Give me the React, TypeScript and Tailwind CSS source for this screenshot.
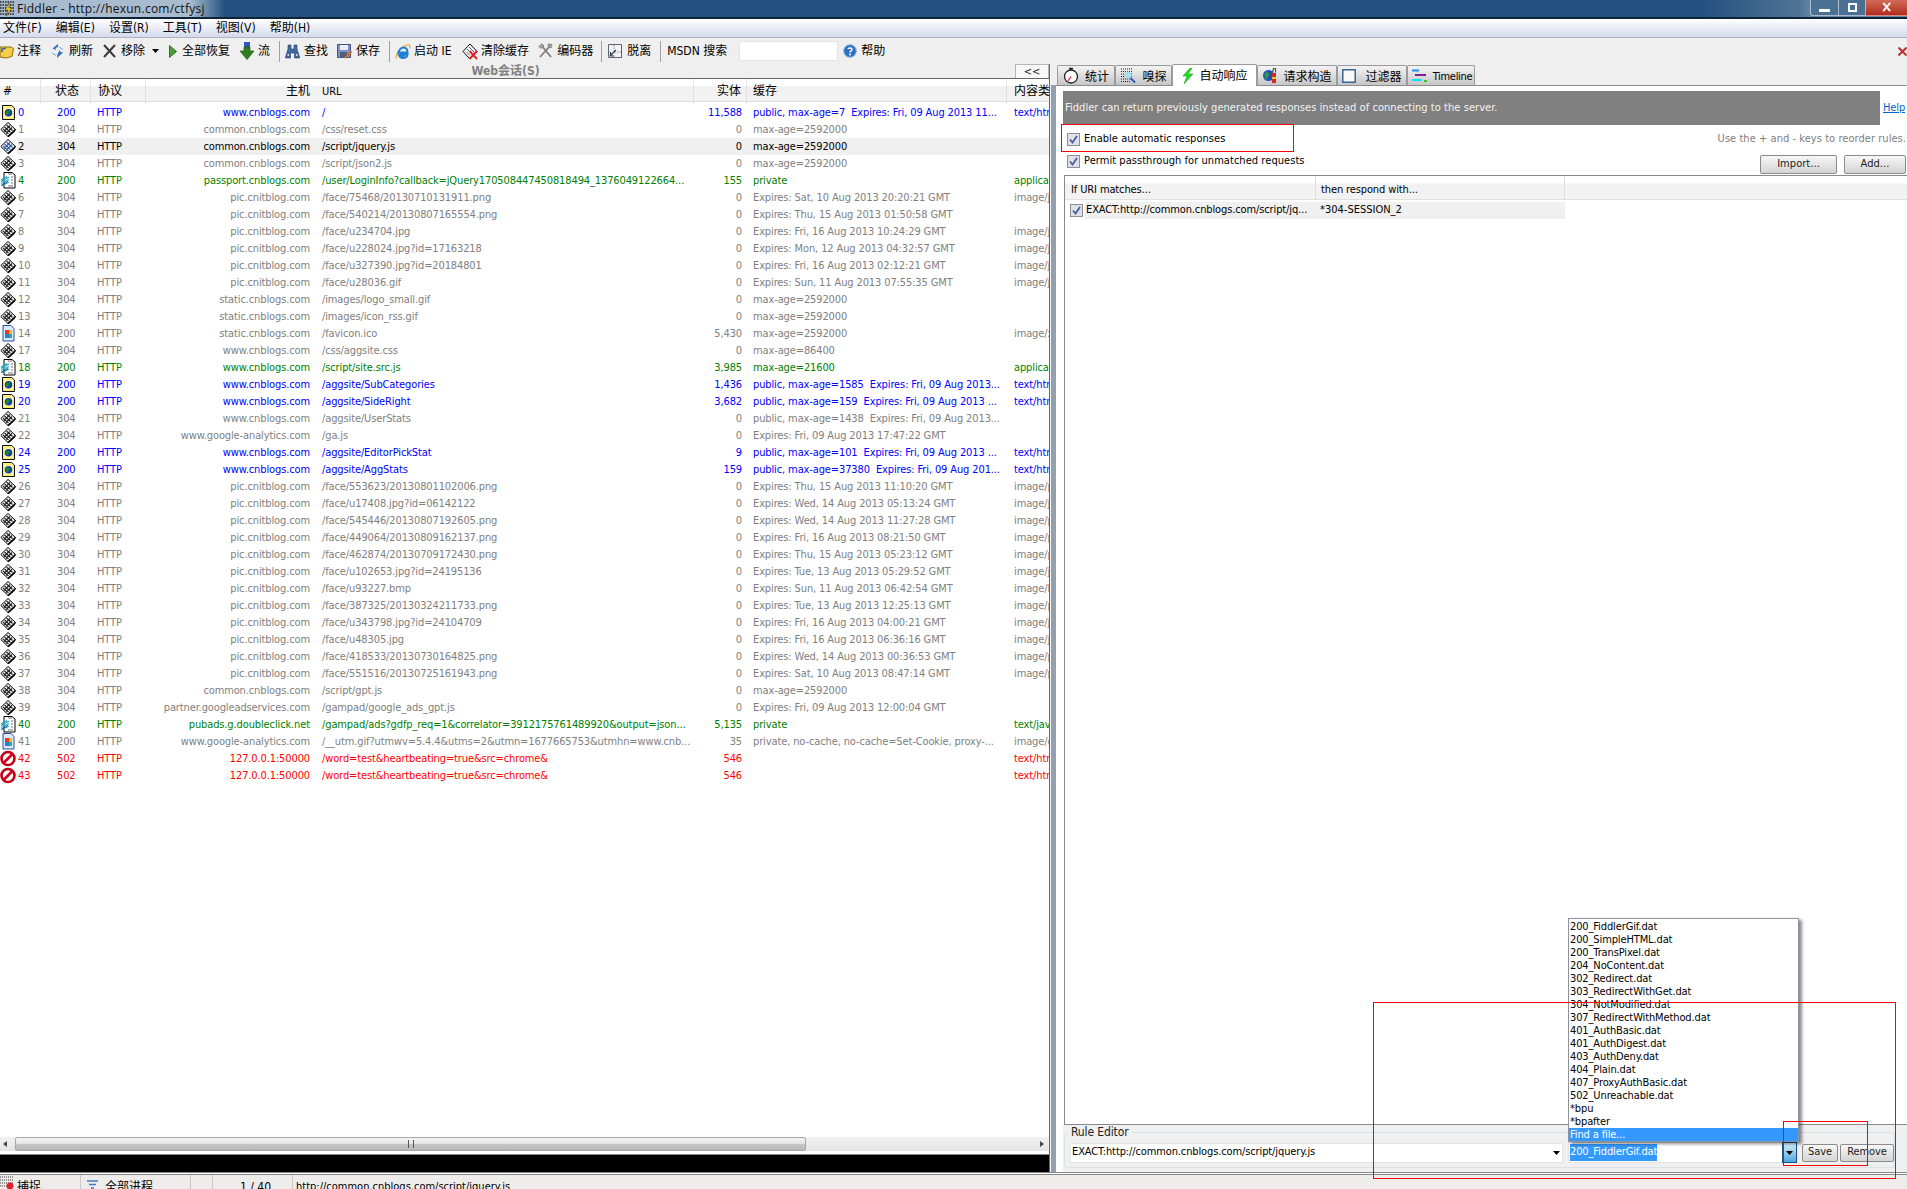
import type { ReactNode } from "react";

const base = "font-['DejaVu_Sans_Condensed','Noto_Sans_CJK_SC',sans-serif]";

type Kind = "d" | "h" | "s" | "i" | "e";

const rowColor: Record<Kind, string> = {
  d: "text-[#808080]",
  h: "text-[#0000ff]",
  s: "text-[#008000]",
  i: "text-[#808080]",
  e: "text-[#ff0000]",
};

const pic = "pic.cnitblog.com";
const com = "common.cnblogs.com";
const sta = "static.cnblogs.com";
const www = "www.cnblogs.com";
const age = "max-age=2592000";

// kind, #, status, host, url, body, cache, type
const rows: [Kind, string, string, string, string, string, string, string][] = [
  ["h", "0", "200", www, "/", "11,588", "public, max-age=7  Expires: Fri, 09 Aug 2013 11...", "text/html"],
  ["d", "1", "304", com, "/css/reset.css", "0", age, ""],
  ["d", "2", "304", com, "/script/jquery.js", "0", age, ""],
  ["d", "3", "304", com, "/script/json2.js", "0", age, ""],
  ["s", "4", "200", "passport.cnblogs.com", "/user/LoginInfo?callback=jQuery170508447450818494_1376049122664...", "155", "private", "application"],
  ["d", "6", "304", pic, "/face/75468/20130710131911.png", "0", "Expires: Sat, 10 Aug 2013 20:20:21 GMT", "image/jpeg"],
  ["d", "7", "304", pic, "/face/540214/20130807165554.png", "0", "Expires: Thu, 15 Aug 2013 01:50:58 GMT", ""],
  ["d", "8", "304", pic, "/face/u234704.jpg", "0", "Expires: Fri, 16 Aug 2013 10:24:29 GMT", "image/jpeg"],
  ["d", "9", "304", pic, "/face/u228024.jpg?id=17163218", "0", "Expires: Mon, 12 Aug 2013 04:32:57 GMT", "image/jpeg"],
  ["d", "10", "304", pic, "/face/u327390.jpg?id=20184801", "0", "Expires: Fri, 16 Aug 2013 02:12:21 GMT", "image/jpeg"],
  ["d", "11", "304", pic, "/face/u28036.gif", "0", "Expires: Sun, 11 Aug 2013 07:55:35 GMT", "image/jpeg"],
  ["d", "12", "304", sta, "/images/logo_small.gif", "0", age, ""],
  ["d", "13", "304", sta, "/images/icon_rss.gif", "0", age, ""],
  ["i", "14", "200", sta, "/favicon.ico", "5,430", age, "image/x-icon"],
  ["d", "17", "304", www, "/css/aggsite.css", "0", "max-age=86400", ""],
  ["s", "18", "200", www, "/script/site.src.js", "3,985", "max-age=21600", "application"],
  ["h", "19", "200", www, "/aggsite/SubCategories", "1,436", "public, max-age=1585  Expires: Fri, 09 Aug 2013...", "text/html"],
  ["h", "20", "200", www, "/aggsite/SideRight", "3,682", "public, max-age=159  Expires: Fri, 09 Aug 2013 ...", "text/html"],
  ["d", "21", "304", www, "/aggsite/UserStats", "0", "public, max-age=1438  Expires: Fri, 09 Aug 2013...", ""],
  ["d", "22", "304", "www.google-analytics.com", "/ga.js", "0", "Expires: Fri, 09 Aug 2013 17:47:22 GMT", ""],
  ["h", "24", "200", www, "/aggsite/EditorPickStat", "9", "public, max-age=101  Expires: Fri, 09 Aug 2013 ...", "text/html"],
  ["h", "25", "200", www, "/aggsite/AggStats", "159", "public, max-age=37380  Expires: Fri, 09 Aug 201...", "text/html"],
  ["d", "26", "304", pic, "/face/553623/20130801102006.png", "0", "Expires: Thu, 15 Aug 2013 11:10:20 GMT", "image/png"],
  ["d", "27", "304", pic, "/face/u17408.jpg?id=06142122", "0", "Expires: Wed, 14 Aug 2013 05:13:24 GMT", "image/jpeg"],
  ["d", "28", "304", pic, "/face/545446/20130807192605.png", "0", "Expires: Wed, 14 Aug 2013 11:27:28 GMT", "image/png"],
  ["d", "29", "304", pic, "/face/449064/20130809162137.png", "0", "Expires: Fri, 16 Aug 2013 08:21:50 GMT", "image/png"],
  ["d", "30", "304", pic, "/face/462874/20130709172430.png", "0", "Expires: Thu, 15 Aug 2013 05:23:12 GMT", "image/png"],
  ["d", "31", "304", pic, "/face/u102653.jpg?id=24195136", "0", "Expires: Tue, 13 Aug 2013 05:29:52 GMT", "image/jpeg"],
  ["d", "32", "304", pic, "/face/u93227.bmp", "0", "Expires: Sun, 11 Aug 2013 06:42:54 GMT", "image/bmp"],
  ["d", "33", "304", pic, "/face/387325/20130324211733.png", "0", "Expires: Tue, 13 Aug 2013 12:25:13 GMT", "image/png"],
  ["d", "34", "304", pic, "/face/u343798.jpg?id=24104709", "0", "Expires: Fri, 16 Aug 2013 04:00:21 GMT", "image/jpeg"],
  ["d", "35", "304", pic, "/face/u48305.jpg", "0", "Expires: Fri, 16 Aug 2013 06:36:16 GMT", "image/jpeg"],
  ["d", "36", "304", pic, "/face/418533/20130730164825.png", "0", "Expires: Wed, 14 Aug 2013 00:36:53 GMT", "image/png"],
  ["d", "37", "304", pic, "/face/551516/20130725161943.png", "0", "Expires: Sat, 10 Aug 2013 08:47:14 GMT", "image/png"],
  ["d", "38", "304", com, "/script/gpt.js", "0", age, ""],
  ["d", "39", "304", "partner.googleadservices.com", "/gampad/google_ads_gpt.js", "0", "Expires: Fri, 09 Aug 2013 12:00:04 GMT", ""],
  ["s", "40", "200", "pubads.g.doubleclick.net", "/gampad/ads?gdfp_req=1&correlator=3912175761489920&output=json...", "5,135", "private", "text/javascript"],
  ["i", "41", "200", "www.google-analytics.com", "/__utm.gif?utmwv=5.4.4&utms=2&utmn=1677665753&utmhn=www.cnb...", "35", "private, no-cache, no-cache=Set-Cookie, proxy-...", "image/gif"],
  ["e", "42", "502", "127.0.0.1:50000", "/word=test&heartbeating=true&src=chrome&", "546", "", "text/html"],
  ["e", "43", "502", "127.0.0.1:50000", "/word=test&heartbeating=true&src=chrome&", "546", "", "text/html"],
];

const responders = [
  "200_FiddlerGif.dat",
  "200_SimpleHTML.dat",
  "200_TransPixel.dat",
  "204_NoContent.dat",
  "302_Redirect.dat",
  "303_RedirectWithGet.dat",
  "304_NotModified.dat",
  "307_RedirectWithMethod.dat",
  "401_AuthBasic.dat",
  "401_AuthDigest.dat",
  "403_AuthDeny.dat",
  "404_Plain.dat",
  "407_ProxyAuthBasic.dat",
  "502_Unreachable.dat",
  "*bpu",
  "*bpafter",
];

const grid = "grid grid-cols-[41px_50px_55px_170px_378px_53px_260px_42px]";

function SessionIcon({ kind, selected }: { kind: Kind; selected?: boolean }) {
  if (kind === "d") {
    const c = selected ? "#2f5fa8" : "#222";
    return (
      <svg width="17" height="17" viewBox="0 0 17 17" className="shrink-0">
        <path d="M8 1.500 15.500 8.500 8 15.500 .8 8.500Z" fill="#f4f4f4" stroke="#000" />
        <path d="M4.500 6 10.500 11.500M6.500 4 12.500 9.500M3 8 8.500 13M10 4.500 4 10.500M12 6.500 6 12.500" stroke={c} strokeWidth="1.100" />
        <path d="M15.500 8.500 8 15.800M14.500 10 9 15" stroke="#000" strokeWidth="1.500" />
      </svg>
    );
  }
  if (kind === "h") {
    return (
      <svg width="17" height="17" viewBox="0 0 17 17" className="shrink-0">
        <path d="M2.500 1.500H11.500L14.500 4V15.500H2.500Z" fill="#fff6a0" stroke="#111" />
        <path d="M3.500 3H11M3.500 14.500H13.500M13.500 5V14M3.500 4V14" stroke="#f2dc10" strokeDasharray="1 1" />
        <circle cx="8.500" cy="8.700" r="3.800" fill="#1b3fa8" />
        <path d="M6 7.500C7 5.500 9 6 9.500 7S8 10 7.500 11.800C6 10.500 5.500 9 6 7.500Z" fill="#1e8a2e" />
      </svg>
    );
  }
  if (kind === "s") {
    return (
      <svg width="17" height="17" viewBox="0 0 17 17" className="shrink-0">
        <path d="M4 .5H12L15 3V16H4Z" fill="#fff" stroke="#000" />
        <path d="M8 2H12M8 14H13M11 5H13M11 8H13M11 11H13" stroke="#777" />
        <path d="M1 8 7 4.500M9 5 1 9.500M1 11.500 9 7.500M2 13.500 9 10" stroke="#25a6c9" strokeWidth="1.300" />
        <path d="M1 13.500 8 9.500" stroke="#14507c" />
      </svg>
    );
  }
  if (kind === "i") {
    return (
      <svg width="17" height="17" viewBox="0 0 17 17" className="shrink-0">
        <path d="M3 .5H11L14 3.500V16H3Z" fill="#dbe8fb" stroke="#2a4fa0" />
        <rect x="5" y="5" width="4" height="4" fill="#e23b2e" />
        <rect x="9" y="5" width="3" height="4" fill="#f4c01e" />
        <rect x="5" y="9" width="4" height="4" fill="#2a7de1" />
        <rect x="9" y="9" width="3" height="4" fill="#37b24d" />
      </svg>
    );
  }
  return (
    <svg width="17" height="17" viewBox="0 0 17 17" className="shrink-0">
      <circle cx="8" cy="8.500" r="6.500" fill="#fff" stroke="#c00014" strokeWidth="2.600" />
      <path d="M3.500 13 12.500 4" stroke="#d4001a" strokeWidth="2.600" />
    </svg>
  );
}

const icons: Record<string, ReactNode> = {
  note: (
    <svg width="14" height="17" viewBox="0 0 14 17" className="shrink-0">
      <path d="M0 4H11L13.500 5.500 12 13.500 6 15 0 14Z" fill="#f5cf45" stroke="#8a6a12" />
      <path d="M1 6.500 6 5M1 8.500 3 8" stroke="#2c5fbe" strokeWidth="1.500" />
    </svg>
  ),
  refresh: (
    <svg width="13" height="16" viewBox="0 0 13 16" className="shrink-0">
      <path d="M7 1 1.500 5.500 5 7 4.500 5 7 4Z" fill="#2f6fc4" />
      <path d="M6 15 12 9.500 9 8.500 9 6.500 6.500 11Z" fill="#2f6fc4" />
      <path d="M8 4 12 6.500M1 10 5 12.500" stroke="#6fa6e6" />
    </svg>
  ),
  remove: (
    <svg width="13" height="14" viewBox="0 0 13 14" className="shrink-0">
      <path d="M1 1 12 13M12 1 1 13" stroke="#3a3a3a" strokeWidth="2" />
    </svg>
  ),
  play: (
    <svg width="8" height="13" viewBox="0 0 8 13" className="shrink-0">
      <path d="M0.500 0.500 7.500 6.500 0.500 12.500Z" fill="#4d9c3a" stroke="#2f6e2a" />
    </svg>
  ),
  stream: (
    <svg width="14" height="18" viewBox="0 0 14 18" className="shrink-0">
      <path d="M4 0H10V5H4Z" fill="#2d55c4" />
      <path d="M4 5H10V9H14L7 17.500 0 9H4Z" fill="#2f7d1d" stroke="#1d5a14" strokeWidth=".7" />
    </svg>
  ),
  find: (
    <svg width="15" height="15" viewBox="0 0 15 15" className="shrink-0">
      <path d="M3 1H6V5H9V1H12V5L14.500 13V14H9.500V9H5.500V14H.5V13L3 5Z" fill="#44679c" stroke="#24406e" strokeWidth=".6" />
      <path d="M2.500 11H4M11 11H12.500" stroke="#c9d8ee" strokeWidth="2" />
    </svg>
  ),
  save: (
    <svg width="15" height="16" viewBox="0 0 15 16" className="shrink-0">
      <path d="M.5 1.500H13.500V14.500H.5Z" fill="#7d8fc5" stroke="#44527e" />
      <rect x="3" y="2" width="8" height="5" fill="#e8ecf6" />
      <rect x="3" y="9" width="7" height="5.500" fill="#555e78" />
      <path d="M8 15 14.500 8.500" stroke="#c9702a" strokeWidth="2" />
    </svg>
  ),
  ie: (
    <svg width="16" height="17" viewBox="0 0 16 17" className="shrink-0">
      <path d="M1.500 15.500C0 12 5 4 12 2 15 1 15.500 3.500 14.500 5.500" fill="none" stroke="#e7a52b" strokeWidth="1.200" />
      <path d="M3.500 9.500H12.500C12.500 6 10.500 4.500 8.500 4.500S4 6.500 3.500 9.500ZM3.500 9.500C3 13.500 6 15 8 15S12 14 12.500 11.500H10C9.500 12.800 8.500 13 8 13 6.500 13 5.800 12 5.800 11H12.500" fill="none" stroke="#1f7fd6" strokeWidth="2" />
    </svg>
  ),
  clear: (
    <svg width="16" height="17" viewBox="0 0 16 17" className="shrink-0">
      <path d="M8 1 15 8.500 8 16 1 8.500Z" fill="#fff" stroke="#000" />
      <path d="M5 6 10 11M7 4 12 9M4 8.500 8 12.500" stroke="#444" strokeWidth=".9" />
      <path d="M7.500 8 15 16M15 8 7.500 16" stroke="#e0202a" strokeWidth="2" />
    </svg>
  ),
  encoder: (
    <svg width="15" height="16" viewBox="0 0 15 16" className="shrink-0">
      <path d="M2 14 12 3M3 2 13 14" stroke="#7d7d7d" strokeWidth="1.800" />
      <path d="M.8 3.500 4 .8 6 3 3 5.500ZM10 1 14 1.500 13 5 10.500 4Z" fill="#a8a8a8" stroke="#5c5c5c" strokeWidth=".6" />
    </svg>
  ),
  detach: (
    <svg width="14" height="16" viewBox="0 0 14 16" className="shrink-0">
      <path d="M.5 1.500H13.500V14.500H.5Z" fill="#f3f3f3" stroke="#5c6472" />
      <path d="M6 2V9H13" stroke="#8b94a3" strokeDasharray="1.500 1" fill="none" />
      <path d="M2 13 8 7M2.500 9V13H6.500" stroke="#2c3a52" strokeWidth="1.200" fill="none" />
    </svg>
  ),
  help: (
    <svg width="14" height="14" viewBox="0 0 14 14" className="shrink-0">
      <circle cx="7" cy="7" r="6.300" fill="#2c6fc0" stroke="#8fb4dd" />
      <path d="M5 5.200C5.300 3.500 9 3.500 9 5.500 9 6.800 7 6.800 7 8.400" fill="none" stroke="#fff" strokeWidth="1.500" />
      <circle cx="7" cy="10.500" r="1" fill="#fff" />
    </svg>
  ),
};

function Tool({ icon, text, gap, className = "" }: { icon: string; text: string; gap: string; className?: string }) {
  return (
    <div className={`flex items-center whitespace-nowrap ${gap} ${className}`}>
      {icons[icon]}
      <span>{text}</span>
    </div>
  );
}

function Sep({ className = "" }: { className?: string }) {
  return <div className={`h-[21px] w-px bg-[#a0a0a0] ${className}`} />;
}

function Check({ className = "" }: { className?: string }) {
  return (
    <svg width="13" height="13" viewBox="0 0 13 13" className={`shrink-0 ${className}`}>
      <rect x=".5" y=".5" width="12" height="12" fill="#dfe1e8" stroke="#8e8f96" />
      <path d="M3 6.500 5.500 9.500 10 3" fill="none" stroke="#4a5c9e" strokeWidth="1.800" />
    </svg>
  );
}

function Caret({ className = "" }: { className?: string }) {
  return (
    <svg width="7" height="4" viewBox="0 0 7 4" className={`shrink-0 ${className}`}>
      <path d="M0 0H7L3.500 4Z" fill="#000" />
    </svg>
  );
}

function Button({ text, className }: { text: string; className: string }) {
  return (
    <div className={`flex items-center justify-center rounded-[2px] border border-[#8a8a8a] bg-gradient-to-b from-[#f7f7f7] to-[#d4d4d4] text-[#222] ${className}`}>
      {text}
    </div>
  );
}

const tabs: { name: string; width: string; gap: string; icon: ReactNode }[] = [
  {
    name: "统计",
    width: "w-[58px]",
    gap: "gap-[6px]",
    icon: (
      <svg width="16" height="17" viewBox="0 0 16 17">
        <circle cx="8" cy="9.500" r="6.500" fill="#fff" stroke="#222" strokeWidth="1.300" />
        <path d="M6 1.500H10M8 2V3" stroke="#222" strokeWidth="1.300" />
        <path d="M8 9.500 5 14" stroke="#e0202a" strokeWidth="1.300" />
      </svg>
    ),
  },
  {
    name: "嗅探",
    width: "w-[57px]",
    gap: "gap-[6px]",
    icon: (
      <svg width="16" height="16" viewBox="0 0 16 16">
        <path d="M1 1H13M1 3.500H13M1 6H13M1 8.500H13M1 11H13M1 13.500H11" stroke="#222" strokeWidth="1" strokeDasharray="1 1" />
        <circle cx="8" cy="7" r="3.500" fill="#a9dff0" />
        <path d="M10.500 10 15 14.500" stroke="#2a56c8" strokeWidth="2" />
      </svg>
    ),
  },
  {
    name: "请求构造",
    width: "w-[80px]",
    gap: "gap-[5px]",
    icon: (
      <svg width="16" height="17" viewBox="0 0 16 17">
        <circle cx="6.500" cy="8.500" r="5.500" fill="#1f4fbf" />
        <path d="M3 6C5 4 7 5 7 7S5 10 5.500 13C3 12 2 9 3 6Z" fill="#2f9a31" />
        <rect x="10" y="6" width="4" height="10" fill="#d42a1c" />
        <path d="M10 11H14" stroke="#f2c21d" strokeWidth="2" />
        <path d="M10.500 5.500 11.500 1.500H13.500V5.500" fill="none" stroke="#555" strokeWidth="1.200" />
      </svg>
    ),
  },
  {
    name: "过滤器",
    width: "w-[70px]",
    gap: "gap-[9px]",
    icon: (
      <svg width="14" height="14" viewBox="0 0 14 14">
        <rect x=".8" y=".8" width="12.400" height="12.400" fill="#f8f8f8" stroke="#1f4f86" strokeWidth="1.300" />
      </svg>
    ),
  },
  {
    name: "Timeline",
    width: "w-[68px] pl-[2px]",
    gap: "gap-[6px]",
    icon: (
      <svg width="15" height="14" viewBox="0 0 15 14">
        <path d="M0 1.500H7" stroke="#1f8cf0" strokeWidth="2" />
        <path d="M3 6H14" stroke="#7b1fa2" strokeWidth="2" />
        <path d="M0 11H10" stroke="#00e5ff" strokeWidth="2" />
        <path d="M12 12H15" stroke="#3cc23c" strokeWidth="2" />
      </svg>
    ),
  },
];

function Tab({ t }: { t: (typeof tabs)[number] }) {
  return (
    <div className={`flex h-[20px] shrink-0 items-center justify-center rounded-t-[2px] border border-b-0 border-[#9a9a9a] bg-gradient-to-b from-[#f4f4f4] to-[#c6c6c6] ${t.width} ${t.gap} ${t.name === "Timeline" ? "text-[11px] tracking-[-0.3px]" : ""}`}>
      {t.icon}
      <span className="pt-[3px]">{t.name}</span>
    </div>
  );
}

export default function App() {
  return (
    <div className={`relative flex h-[1189px] w-[1907px] flex-col overflow-hidden bg-white text-[11px] tracking-[-0.12px] text-black ${base}`}>
      {/* title bar */}
      <div className="flex h-[19px] shrink-0 items-center justify-between border-b-2 border-[#0d2338] bg-[linear-gradient(90deg,#a9bccf_0px,#a9bccf_190px,#6f90b0_205px,#24507f_225px,#22507f_1700px,#4f7596_1800px,#6d8ba6_1815px)]">
        <div className="flex items-center gap-[3px]">
          <svg width="14" height="16" viewBox="0 0 14 16">
            <path d="M0 1H14M0 4H14M0 7H14M0 10H14M0 13H14" stroke="#222" strokeWidth="1.500" strokeDasharray="1.500 1" />
            <path d="M9 2 5 9H8L6 15 12 7H9Z" fill="#f1d21f" stroke="#222" strokeWidth=".5" />
          </svg>
          <span className="font-['Open_Sans',sans-serif] text-[12px] tracking-[.25px] text-[#111]">Fiddler - http://hexun.com/ctfysj</span>
        </div>
        <div className="flex h-[16px] items-stretch self-start">
          <div className="flex w-[29px] items-end justify-center rounded-bl-[3px] border border-t-0 border-[#a9bdcf] bg-[#4a7094] pb-[3px]">
            <div className="h-[3px] w-[11px] bg-white" />
          </div>
          <div className="flex w-[27px] items-center justify-center border-b border-r border-[#a9bdcf] bg-[#4a7094]">
            <div className="size-[9px] border-2 border-white bg-[#4a7094]" />
          </div>
          <div className="flex w-[41px] items-center justify-center border-b border-[#d88] bg-gradient-to-b from-[#d2695a] to-[#b12a1c] text-[15px] leading-none font-bold text-white">×</div>
        </div>
      </div>

      {/* menu */}
      <div className="flex h-[19px] shrink-0 items-center gap-[14px] border-b border-[#b0b3bd] bg-gradient-to-b from-white to-[#d5dbed] pl-[3px] text-[12px] tracking-normal">
        <span>文件(F)</span>
        <span>编辑(E)</span>
        <span>设置(R)</span>
        <span>工具(T)</span>
        <span>视图(V)</span>
        <span>帮助(H)</span>
      </div>

      {/* toolbar */}
      <div className="flex h-[26px] shrink-0 items-center bg-[#efefef] text-[12px] tracking-normal">
        <Tool icon="note" text="注释" gap="gap-[3px]" />
        <Tool icon="refresh" text="刷新" gap="gap-[5px]" className="ml-[10px]" />
        <Tool icon="remove" text="移除" gap="gap-[5px]" className="ml-[10px]" />
        <Caret className="ml-[7px]" />
        <Tool icon="play" text="全部恢复" gap="gap-[5px]" className="ml-[10px]" />
        <Tool icon="stream" text="流" gap="gap-[4px]" className="ml-[10px]" />
        <Sep className="ml-[9px]" />
        <Tool icon="find" text="查找" gap="gap-[4px]" className="ml-[5px]" />
        <Tool icon="save" text="保存" gap="gap-[4px]" className="ml-[9px]" />
        <Sep className="ml-[9px]" />
        <Tool icon="ie" text="启动 IE" gap="gap-[3px]" className="ml-[5px] w-[57px]" />
        <Tool icon="clear" text="清除缓存" gap="gap-[3px]" className="ml-[10px]" />
        <Tool icon="encoder" text="编码器" gap="gap-[4px]" className="ml-[9px]" />
        <Sep className="ml-[8px]" />
        <Tool icon="detach" text="脱离" gap="gap-[5px]" className="ml-[6px]" />
        <Sep className="ml-[9px]" />
        <span className="ml-[6px] w-[67px] whitespace-nowrap">MSDN 搜索</span>
        <div className="ml-[5px] h-[20px] w-[99px] rounded-[2px] border border-[#e4e4e4] bg-white" />
        <Tool icon="help" text="帮助" gap="gap-[4px]" className="ml-[5px]" />
        <div className="flex-1" />
        <svg width="9" height="9" viewBox="0 0 9 9">
          <path d="M.5 .5 8.500 8.500M8.500 .5 .5 8.500" stroke="#b93333" strokeWidth="2" />
        </svg>
      </div>

      {/* main split */}
      <div className="flex min-h-0 flex-1 border-b-[3px] border-double border-[#888]">
        {/* sessions */}
        <div className="flex w-[1050px] shrink-0 flex-col border-r border-[#666]">
          <div className="flex h-[15px] shrink-0 border-b border-[#666] bg-[#efefef]">
            <div className="flex-1 pr-[4px] text-center text-[12px] leading-[14px] font-bold tracking-normal text-[#808080]">Web会话(S)</div>
            <div className="flex w-[34px] items-center justify-center border border-b-0 border-[#b5b5b5] bg-[#f7f7f7] text-[11px] leading-none text-[#222]">&lt;&lt;</div>
          </div>
          <div className={`${grid} h-[23px] shrink-0 items-center border-b border-[#dcdcdc] bg-[linear-gradient(#ffffff_0%,#ffffff_30%,#f0f0f0_35%,#f3f3f3_100%)] text-[12px] tracking-normal`}>
            <div className="h-full border-r border-[#e2e2e2] pl-[3px] leading-[25px]">#</div>
            <div className="h-full border-r border-[#e2e2e2] pl-[14px] leading-[25px]">状态</div>
            <div className="h-full border-r border-[#e2e2e2] pl-[7px] leading-[25px]">协议</div>
            <div className="h-full pr-[6px] text-right leading-[25px]">主机</div>
            <div className="h-full border-r border-[#e2e2e2] pl-[6px] text-[11px] leading-[25px]">URL</div>
            <div className="h-full border-r border-[#e2e2e2] pr-[5px] text-right leading-[25px]">实体</div>
            <div className="h-full border-r border-[#e2e2e2] pl-[6px] leading-[25px]">缓存</div>
            <div className="h-full overflow-hidden pl-[7px] leading-[25px] whitespace-nowrap">内容类型</div>
          </div>
          <div className="min-h-0 flex-1 pt-[2px]">
            {rows.map((r) => {
              const selected = r[1] === "2";
              return (
                <div key={r[1]} className={`${grid} h-[17px] items-center leading-[17px] whitespace-nowrap ${selected ? "text-black" : rowColor[r[0]]}`}>
                  <div className="flex items-center">
                    <SessionIcon kind={r[0]} selected={selected} />
                    <span className={`flex-1 pl-[1px] ${selected ? "bg-[#f0f0f0]" : ""}`}>{r[1]}</span>
                  </div>
                  <div className={`pl-[16px] ${selected ? "bg-[#f0f0f0]" : ""}`}>{r[2]}</div>
                  <div className={`pl-[6px] ${selected ? "bg-[#f0f0f0]" : ""}`}>HTTP</div>
                  <div className={`pr-[6px] text-right ${selected ? "bg-[#f0f0f0]" : ""}`}>{r[3]}</div>
                  <div className={`overflow-hidden pl-[6px] ${selected ? "bg-[#f0f0f0]" : ""}`}>{r[4]}</div>
                  <div className={`pr-[5px] text-right ${selected ? "bg-[#f0f0f0]" : ""}`}>{r[5]}</div>
                  <div className={`h-[17px] overflow-hidden pl-[6px] whitespace-pre ${selected ? "bg-[#f0f0f0]" : ""}`}>{r[6]}</div>
                  <div className={`h-[17px] overflow-hidden pl-[7px] ${selected ? "bg-[#f0f0f0]" : ""}`}>{r[7]}</div>
                </div>
              );
            })}
          </div>
          {/* horizontal scrollbar */}
          <div className="flex h-[14px] shrink-0 items-center bg-gradient-to-b from-[#f2f2f2] to-[#e4e4e4]">
            <svg width="15" height="14" viewBox="0 0 15 14" className="shrink-0">
              <path d="M7 4V10L3 7Z" fill="#444" />
            </svg>
            <div className="flex h-[14px] w-[791px] items-center justify-center rounded-[2px] border border-[#a8a8a8] bg-[linear-gradient(#f4f4f4_0%,#e6e6e6_45%,#c4c4c4_55%,#b9b9b9_100%)]">
              <div className="h-[8px] w-[6px] border-x border-[#555] [background:linear-gradient(90deg,transparent_40%,#555_40%,#555_60%,transparent_60%)]" />
            </div>
            <div className="flex-1" />
            <svg width="15" height="14" viewBox="0 0 15 14" className="shrink-0">
              <path d="M6 4V10L10 7Z" fill="#444" />
            </svg>
          </div>
          <div className="mt-[3px] h-[18px] shrink-0 border-t border-[#888] bg-black" />
        </div>

        {/* splitter */}
        <div className="flex w-[6px] shrink-0 flex-col border-l border-[#f4f4f4]">
          <div className="h-[21px] bg-[#f0f0f0]" />
          <div className="flex-1 bg-[#93a0af]" />
        </div>

        {/* auto responder */}
        <div className="flex min-w-0 flex-1 flex-col">
          <div className="flex h-[22px] shrink-0 items-end border-b border-[#8c8c8c] bg-[#f0f0f0] pl-[1px] text-[12px] tracking-normal">
            <Tab t={tabs[0]} />
            <Tab t={tabs[1]} />
            <div className="relative z-10 mb-[-1px] flex h-[22px] w-[85px] shrink-0 items-center justify-center gap-[5px] rounded-t-[2px] border border-b-0 border-[#9a9a9a] bg-white">
              <svg width="13" height="16" viewBox="0 0 13 16">
                <path d="M9 0 2 8H6L3 16 12 6H7L11 0Z" fill="#22e022" stroke="#0f8a0f" strokeWidth=".5" />
              </svg>
              <span className="pt-[1px]">自动响应</span>
            </div>
            <Tab t={tabs[2]} />
            <Tab t={tabs[3]} />
            <Tab t={tabs[4]} />
          </div>

          <div className="flex min-h-0 flex-1 flex-col pt-[5px] pl-[7px]">
            <div className="flex h-[34px] shrink-0">
              <div className="flex w-[817px] items-center bg-[#808080] pl-[2px] tracking-[0.05px] text-[#f4f4f4]">Fiddler can return previously generated responses instead of connecting to the server.</div>
              <span className="ml-[3px] self-center text-[#0066cc] underline">Help</span>
            </div>
            <div className="flex h-[50px] shrink-0 tracking-[0.05px]">
              <div className="flex flex-col pt-[7px] pl-[4px]">
                <label className="flex h-[14px] items-center gap-[4px]">
                  <Check />
                  Enable automatic responses
                </label>
                <label className="mt-[8px] flex h-[14px] items-center gap-[4px]">
                  <Check />
                  Permit passthrough for unmatched requests
                </label>
              </div>
              <div className="flex flex-1 flex-col items-end">
                <div className="mt-[6px] pr-[1px] whitespace-nowrap text-[#808080]">Use the + and - keys to reorder rules.</div>
                <div className="mt-[7px] flex gap-[7px] pr-[1px]">
                  <Button text="Import..." className="h-[19px] w-[77px]" />
                  <Button text="Add..." className="h-[19px] w-[62px]" />
                </div>
              </div>
            </div>

            {/* rules list */}
            <div className="ml-[1px] flex min-h-0 flex-1 flex-col border-y border-l border-[#8a8a8a]">
              <div className="flex h-[24px] shrink-0 border-b border-[#e0e0e0] bg-[linear-gradient(#ffffff_0%,#ffffff_30%,#f1f1f1_35%,#f3f3f3_100%)] leading-[27px]">
                <div className="w-[251px] border-r border-[#dcdcdc] pl-[6px]">If URI matches...</div>
                <div className="w-[249px] border-r border-[#dcdcdc] pl-[5px]">then respond with...</div>
              </div>
              <div className="mt-[2px] flex h-[17px] w-[500px] items-center">
                <Check className="ml-[5px]" />
                <div className="ml-[2px] flex h-full flex-1 items-center bg-[#f0f0f0] whitespace-nowrap">
                  <span className="w-[235px] overflow-hidden pl-[1px]">EXACT:http://common.cnblogs.com/script/jq...</span>
                  <span className="tracking-normal">*304-SESSION_2</span>
                </div>
              </div>
            </div>

            {/* rule editor */}
            <div className="h-[47px] shrink-0 bg-[#f0f0f0] pr-[13px] pl-[1px]">
              <fieldset className="h-[43px] rounded-[3px] border border-[#dce1e6]">
                <legend className="ml-[3px] px-[3px] text-[12px] leading-[14px] text-[#222]">Rule Editor</legend>
                <div className="mt-[3px] flex items-center pl-[5px]">
                  <div className="flex h-[20px] w-[493px] items-center justify-between border border-[#e3e3e3] bg-white pr-[1px] pl-[1px]">
                    <span>EXACT:http://common.cnblogs.com/script/jquery.js</span>
                    <Caret className="mr-[1px]" />
                  </div>
                  <div className="relative ml-[5px] flex h-[21px] w-[230px] items-center justify-between border border-[#e3e3e3] bg-white pl-[1px]">
                    <span className="bg-[#3399ff] text-white">200_FiddlerGif.dat</span>
                    <div className="flex h-[21px] w-[15px] items-center justify-center border border-[#1f4f7a] bg-gradient-to-b from-[#d7effc] to-[#4aa8dd]">
                      <Caret />
                    </div>
                    {/* open drop down */}
                    <div className="absolute bottom-[20px] left-[-1px] w-[231px] border border-[#8a93a3] bg-white pt-[1px] shadow-[3px_2px_3px_rgba(0,0,0,.45)]">
                      {responders.map((name) => (
                        <div key={name} className="h-[13px] pl-[1px] leading-[13px]">{name}</div>
                      ))}
                      <div className="h-[13px] bg-[#3399ff] pl-[1px] leading-[13px] text-white">Find a file...</div>
                    </div>
                  </div>
                  <Button text="Save" className="ml-[4px] h-[18px] w-[36px]" />
                  <Button text="Remove" className="ml-[2px] h-[18px] w-[54px]" />
                </div>
              </fieldset>
            </div>
          </div>
        </div>
      </div>

      {/* status bar */}
      <div className="flex h-[14px] shrink-0 items-start overflow-hidden bg-[#efecec] text-[12px] leading-[24px] tracking-normal">
        <div className="flex h-[14px] w-[81px] items-start gap-[3px] border-r border-[#c9c9c9] pt-[1px]">
          <svg width="14" height="14" viewBox="0 0 14 14" className="shrink-0">
            <path d="M0 1H14M0 4H14M0 7H14M0 10H14" stroke="#333" strokeDasharray="1 1" />
            <circle cx="10" cy="10" r="3.500" fill="#e0202a" />
          </svg>
          <span className="-mt-[1px]">捕捉</span>
        </div>
        <div className="flex h-[14px] w-[110px] items-start gap-[7px] border-r border-[#c9c9c9] pl-[6px]">
          <svg width="11" height="13" viewBox="0 0 11 13" className="mt-[5px] shrink-0">
            <path d="M0 1H11M2 4.500H9M4 8H7" stroke="#4a78c8" strokeWidth="1.500" />
          </svg>
          <span>全部进程</span>
        </div>
        <div className="h-[14px] w-[22px] border-r border-[#c9c9c9]" />
        <div className="h-[14px] w-[80px] border-r border-[#c9c9c9] pl-[27px]">1 / 40</div>
        <div className="pl-[3px] text-[11px]">http://common.cnblogs.com/script/jquery.js</div>
      </div>

      {/* annotation boxes drawn over the screenshot */}
      <div className="pointer-events-none absolute top-[124px] left-[1061px] h-[28px] w-[233px] border border-[#ff0000]" />
      <div className="pointer-events-none absolute top-[1002px] left-[1373px] h-[177px] w-[523px] border border-[#ff0000]" />
      <div className="pointer-events-none absolute top-[1121px] left-[1783px] h-[45px] w-[85px] border border-[#ff0000]" />
    </div>
  );
}
